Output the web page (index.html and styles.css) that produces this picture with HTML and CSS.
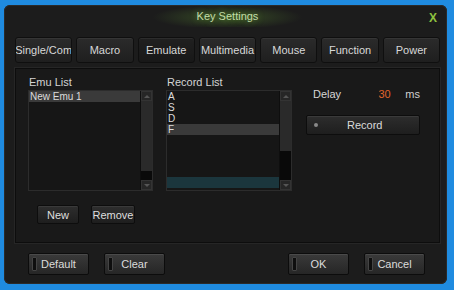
FILE: index.html
```html
<!DOCTYPE html>
<html>
<head>
<meta charset="utf-8">
<link rel="stylesheet" href="styles.css">
</head>
<body>
<div class="window">
  <div class="titlebar">
    <span class="title">Key Settings</span>
    <span class="close">X</span>
  </div>
  <div class="tabs">
    <div class="tab">Single/Com</div>
    <div class="tab">Macro</div>
    <div class="tab active">Emulate</div>
    <div class="tab">Multimedia</div>
    <div class="tab">Mouse</div>
    <div class="tab">Function</div>
    <div class="tab">Power</div>
  </div>
  <div class="panel">
    <div class="col col-emu">
      <div class="label">Emu List</div>
      <div class="listbox">
        <div class="items">
          <div class="item sel">New Emu 1</div>
        </div>
        <div class="scroll">
          <div class="arrow up"></div>
          <div class="track"><div class="fill"></div><div class="dark"></div></div>
          <div class="arrow down"></div>
        </div>
      </div>
      <div class="emu-btns">
        <div class="sbtn new">New</div>
        <div class="sbtn remove">Remove</div>
      </div>
    </div>
    <div class="col col-rec">
      <div class="label">Record List</div>
      <div class="listbox rec">
        <div class="items">
          <div class="item">A</div>
          <div class="item">S</div>
          <div class="item">D</div>
          <div class="item sel">F</div>
          <div class="spacer"></div>
          <div class="item teal"></div>
        </div>
        <div class="scroll">
          <div class="arrow up"></div>
          <div class="track"><div class="fill"></div><div class="dark"></div></div>
          <div class="arrow down"></div>
        </div>
      </div>
    </div>
    <div class="col col-right">
      <div class="delay">
        <span class="dl">Delay</span>
        <span class="dv">30</span>
        <span class="du">ms</span>
      </div>
      <div class="recbtn"><span class="dot"></span><span class="rt">Record</span></div>
    </div>
  </div>
  <div class="footer">
    <div class="fbtn">Default</div>
    <div class="fbtn">Clear</div>
    <div class="grow"></div>
    <div class="fbtn">OK</div>
    <div class="fbtn">Cancel</div>
  </div>
</div>
</body>
</html>
```
FILE: styles.css
```css
html, body {
  margin: 0;
  padding: 0;
}
body {
  width: 454px;
  height: 290px;
  background: #1f8be0;
  font-family: "Liberation Sans", Arial, sans-serif;
  color: #d6d6d6;
  overflow: hidden;
}
.window {
  margin: 5px 7px 0 4px;
  width: 443px;
  height: 279px;
  box-sizing: border-box;
  background: #1c1c1c;
  border-radius: 6px;
  box-shadow: inset 0 0 0 1px #2a2a2a;
  display: flex;
  flex-direction: column;
  padding: 0 7px 0 11px;
}
.titlebar {
  height: 22px;
  display: flex;
  align-items: center;
  justify-content: center;
  position: relative;
  background: radial-gradient(ellipse 75px 12px at 50% 55%, rgba(90,140,50,0.45), rgba(90,140,50,0) 100%);
}
.title {
  font-size: 11px;
  color: #c3dda8;
  text-shadow: 0 0 6px rgba(120,190,60,0.6);
}
.close {
  position: absolute;
  right: 3px;
  top: 6px;
  font-size: 12px;
  font-weight: bold;
  color: #8ec23f;
}
.tabs {
  margin-top: 10px;
  display: flex;
  gap: 4px;
  height: 26px;
}
.tab {
  flex: 1;
  box-sizing: border-box;
  border: 1px solid #0f0f0f;
  border-radius: 3px;
  background: linear-gradient(#2b2b2b, #1f1f1f);
  box-shadow: inset 0 1px 0 #353535;
  display: flex;
  align-items: center;
  justify-content: center;
  font-size: 11px;
  color: #d8d8d8;
  white-space: nowrap;
  overflow: hidden;
}
.tab.active {
  background: linear-gradient(#202020, #181818);
  box-shadow: inset 0 1px 0 #2c2c2c;
}
.panel {
  margin-top: 5px;
  height: 175px;
  box-sizing: border-box;
  border: 1px solid #0d0d0d;
  box-shadow: 0 0 0 1px #262626;
  background: #191919;
  display: flex;
  padding: 7px 0 0 12px;
}
.col {
  display: flex;
  flex-direction: column;
}
.col-emu {
  width: 125px;
}
.col-rec {
  width: 126px;
  margin-left: 13px;
}
.col-right {
  margin-left: 14px;
  width: 114px;
}
.label {
  font-size: 11px;
  height: 13px;
  line-height: 13px;
  padding-left: 1px;
  color: #d4d4d4;
}
.listbox {
  margin-top: 1px;
  height: 101px;
  box-sizing: border-box;
  border: 1px solid #2c2c2c;
  background: #161616;
  display: flex;
}
.items {
  flex: 1;
  display: flex;
  flex-direction: column;
}
.item {
  font-size: 10px;
  height: 11px;
  line-height: 11px;
  padding-left: 1px;
  color: #dcdcdc;
}
.item.sel {
  background: #3a3a3a;
}
.spacer {
  flex: 1;
}
.item.teal {
  background: #1b363d;
  height: 11px;
  margin-bottom: 2px;
}
.scroll {
  width: 11px;
  display: flex;
  flex-direction: column;
  border-left: 1px solid #0e0e0e;
}
.arrow {
  height: 10px;
  background: #262626;
  border: 1px solid #333;
  box-sizing: border-box;
  position: relative;
}
.arrow::after {
  content: "";
  position: absolute;
  left: 2px;
  top: 3px;
  border-left: 3px solid transparent;
  border-right: 3px solid transparent;
}
.arrow.up::after {
  border-bottom: 3px solid #555;
}
.arrow.down::after {
  border-top: 3px solid #555;
}
.track {
  flex: 1;
  display: flex;
  flex-direction: column;
}
.fill {
  flex: 1;
  background: #2a2a2a;
}
.dark {
  height: 9px;
  background: #0a0a0a;
}
.rec .fill {
  flex: 0 0 50px;
}
.rec .dark {
  flex: 1;
  height: auto;
  background: #090909;
}
.emu-btns {
  display: flex;
  margin-top: 14px;
  padding-left: 9px;
  gap: 12px;
}
.sbtn {
  height: 19px;
  box-sizing: border-box;
  border: 1px solid #0d0d0d;
  border-radius: 2px;
  background: linear-gradient(#2e2e2e, #1e1e1e);
  box-shadow: inset 0 1px 0 #3a3a3a;
  font-size: 11px;
  color: #dedede;
  display: flex;
  align-items: center;
  justify-content: center;
}
.sbtn.new {
  width: 42px;
}
.sbtn.remove {
  width: 44px;
}
.delay {
  display: flex;
  align-items: center;
  font-size: 11px;
  height: 14px;
  margin-top: 11px;
  padding-left: 7px;
}
.dl {
  width: 68px;
}
.dv {
  color: #e0642c;
  width: 28px;
}
.du {
  color: #d0d0d0;
}
.recbtn {
  margin-top: 14px;
  height: 20px;
  box-sizing: border-box;
  border: 1px solid #0d0d0d;
  border-radius: 2px;
  background: linear-gradient(#2d2d2d, #1e1e1e);
  box-shadow: inset 0 1px 0 #3a3a3a;
  display: flex;
  align-items: center;
  font-size: 11px;
  color: #dadada;
  width: 114px;
}
.dot {
  width: 4px;
  height: 4px;
  border-radius: 50%;
  background: #8a8a8a;
  margin-left: 7px;
}
.rt {
  margin-left: 29px;
}
.footer {
  margin-top: 10px;
  display: flex;
  gap: 15px;
  padding: 0 15px 0 13px;
}
.grow {
  flex: 1;
}
.fbtn {
  width: 61px;
  height: 22px;
  box-sizing: border-box;
  border: 1px solid #0c0c0c;
  border-radius: 2px;
  background: linear-gradient(#3a3a3a, #262626);
  box-shadow: inset 0 1px 0 #4a4a4a;
  font-size: 11px;
  color: #dcdcdc;
  display: flex;
  align-items: center;
  justify-content: center;
  position: relative;
}
.fbtn::before {
  content: "";
  position: absolute;
  left: 3px;
  top: 3px;
  bottom: 3px;
  width: 3px;
  background: #0e0e0e;
  border: 1px solid #444;
  border-radius: 1px;
}
```
